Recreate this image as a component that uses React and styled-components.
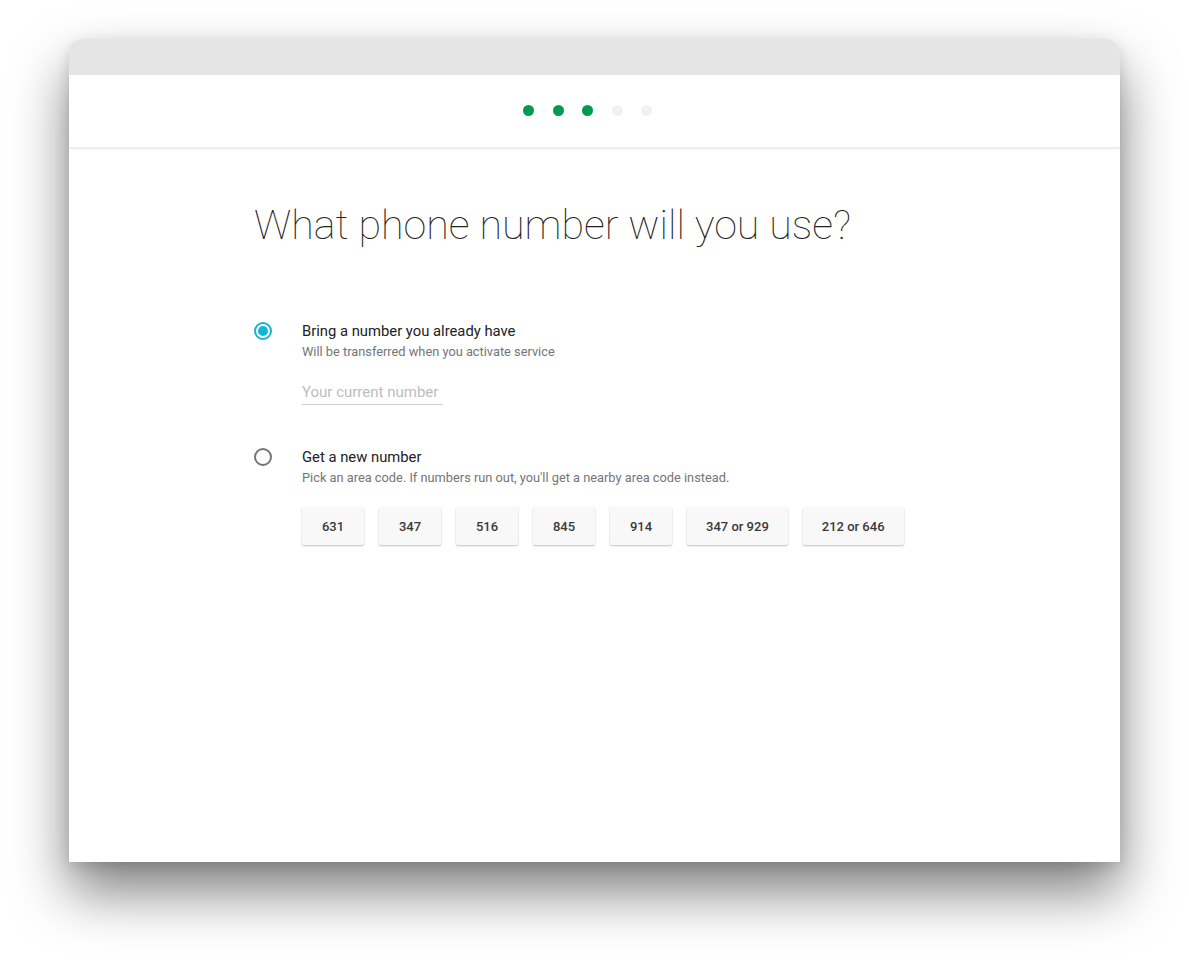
import React from "react";
import styled, { createGlobalStyle } from "styled-components";

const Global = createGlobalStyle`
  html, body { margin: 0; padding: 0; background: #fff; }
  body { font-family: Roboto, "Liberation Sans", sans-serif; }
`;

const Page = styled.div`
  padding: 39px 0 0 69px;
  height: 961px;
  box-sizing: border-box;
`;

const Window = styled.div`
  width: 1051px;
  height: 823px;
  display: flex;
  flex-direction: column;
  background: #fff;
  border-radius: 14px 14px 0 0;
  box-shadow: 0 30px 55px rgba(0, 0, 0, 0.5), 0 4px 14px rgba(0, 0, 0, 0.12);
`;

const TitleBar = styled.div`
  height: 36px;
  background: #e5e5e5;
  border-radius: 14px 14px 0 0;
`;

const Header = styled.div`
  height: 71px;
  padding: 0 14px 1px 0;
  display: flex;
  align-items: center;
  justify-content: center;
  gap: 18.5px;
  border-bottom: 2px solid #eeeeee;
  box-shadow: 0 1px 3px rgba(0, 0, 0, 0.03);
`;

const Dot = styled.span`
  width: 11px;
  height: 11px;
  border-radius: 50%;
  background: ${(p) => (p.$done ? "#009b4f" : "#f2f2f2")};
`;

const Content = styled.div`
  padding: 50px 0 0 185px;
`;

const Title = styled.h1`
  margin: 0;
  font-family: Roboto, sans-serif;
  font-weight: 100;
  font-size: 41.2px;
  line-height: 52px;
  color: #222;
`;

const Options = styled.div`
  margin-top: 69px;
  display: flex;
  flex-direction: column;
  gap: 41px;
`;

const Option = styled.div`
  display: flex;
  align-items: flex-start;
  gap: 30px;
`;

const Radio = styled.span`
  flex: none;
  margin-top: 2px;
  width: 18px;
  height: 18px;
  box-sizing: border-box;
  border-radius: 50%;
  border: 2px solid ${(p) => (p.$on ? "#14b5d3" : "#757575")};
  display: flex;
  align-items: center;
  justify-content: center;
  &::after {
    content: "";
    width: 10px;
    height: 10px;
    border-radius: 50%;
    background: #14b5d3;
    display: ${(p) => (p.$on ? "block" : "none")};
  }
`;

const Body = styled.div`
  display: flex;
  flex-direction: column;
`;

const Label = styled.div`
  font-size: 14.8px;
  line-height: 22px;
  color: #222;
`;

const Sub = styled.div`
  font-size: 12.8px;
  line-height: 20px;
  color: #757575;
`;

const Input = styled.input`
  margin-top: 20px;
  width: 141px;
  border: none;
  border-bottom: 1px solid #cfcfcf;
  padding: 0 0 2px 0;
  font-family: Roboto, sans-serif;
  font-size: 15px;
  line-height: 20px;
  color: #222;
  outline: none;
  background: transparent;
  &::placeholder { color: #bdbdbd; }
`;

const Codes = styled.div`
  margin-top: 19px;
  display: flex;
  gap: 15px;
`;

const Code = styled.button`
  height: 38px;
  min-width: 62px;
  padding: 0 19px;
  border: none;
  border-radius: 2px;
  background: #f8f8f8;
  box-shadow: 0 1px 2px rgba(0, 0, 0, 0.25);
  font-family: Roboto, sans-serif;
  font-weight: 500;
  font-size: 13px;
  color: #3a3a3a;
  cursor: pointer;
`;

const codes = ["631", "347", "516", "845", "914", "347 or 929", "212 or 646"];

export default function App() {
  return (
    <>
      <Global />
      <Page>
        <Window>
          <TitleBar />
          <Header>
            {[1, 1, 1, 0, 0].map((d, i) => (
              <Dot key={i} $done={!!d} />
            ))}
          </Header>
          <Content>
            <Title>What phone number will you use?</Title>
            <Options>
              <Option>
                <Radio $on />
                <Body>
                  <Label>Bring a number you already have</Label>
                  <Sub>Will be transferred when you activate service</Sub>
                  <Input placeholder="Your current number" />
                </Body>
              </Option>
              <Option>
                <Radio />
                <Body>
                  <Label>Get a new number</Label>
                  <Sub>Pick an area code. If numbers run out, you'll get a nearby area code instead.</Sub>
                  <Codes>
                    {codes.map((c) => (
                      <Code key={c}>{c}</Code>
                    ))}
                  </Codes>
                </Body>
              </Option>
            </Options>
          </Content>
        </Window>
      </Page>
    </>
  );
}
